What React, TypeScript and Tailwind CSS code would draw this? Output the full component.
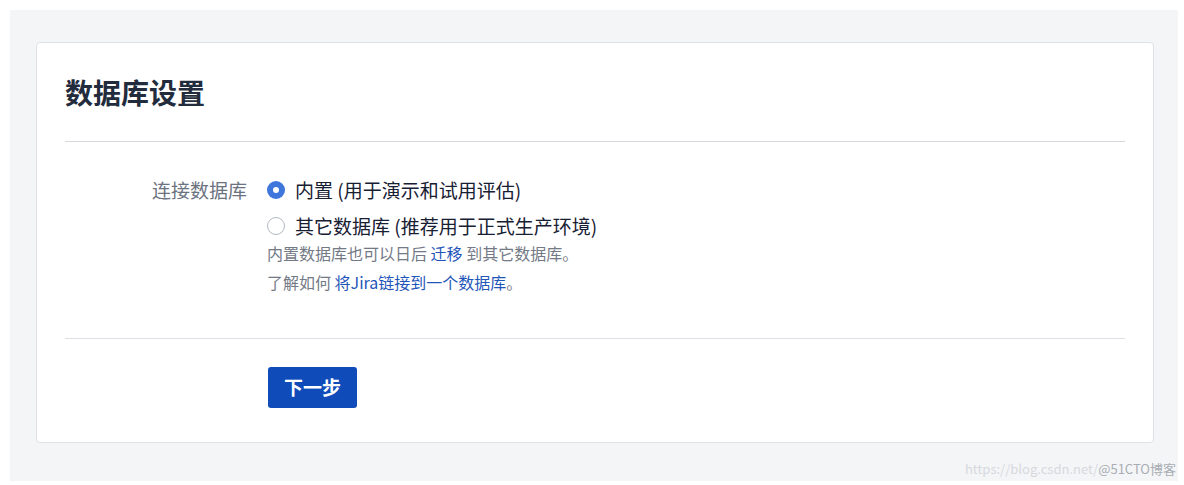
const font = { fontFamily: '"Noto Sans CJK SC", "Noto Sans", sans-serif' };

function Radio({ checked }: { checked?: boolean }) {
  if (checked) {
    return (
      <span className="flex h-[18px] w-[18px] shrink-0 items-center justify-center rounded-full bg-[#3f76dc]">
        <span className="h-[6px] w-[6px] rounded-full bg-white" />
      </span>
    );
  }
  return <span className="h-[18px] w-[18px] shrink-0 rounded-full border-[1.5px] border-[#b3b8c0] bg-white" />;
}

export default function App() {
  return (
    <div className="relative h-[485px] w-[1184px] bg-white pl-[10px] pt-[10px]" style={font}>
      <div className="h-[471px] w-[1168px] bg-[#f4f5f7] pl-[26px] pt-[32px]">
        <div className="h-[401px] w-[1118px] rounded-[4px] border border-[#dfe1e6] bg-white px-[28px] pt-[31px]">
          {/* Header */}
          <h1 className="text-[28px] font-bold leading-[36px] text-[#232c3d]">数据库设置</h1>
          <div className="mt-[31px] h-px bg-[#d6d9de]" />

          {/* Database choice */}
          <div className="mt-[32px] flex">
            <div className="w-[183px] pr-[1px] text-right text-[19px] leading-[32px] text-[#6b7280]">连接数据库</div>
            <div className="ml-[19px] flex flex-col">
              <div className="flex flex-col gap-[4px]">
                <label className="flex h-[32px] items-center gap-[10px] text-[19px] text-[#172033]">
                  <Radio checked />
                  内置 (用于演示和试用评估)
                </label>
                <label className="flex h-[32px] items-center gap-[10px] text-[19px] text-[#172033]">
                  <Radio />
                  其它数据库 (推荐用于正式生产环境)
                </label>
              </div>
              <div className="mt-[-3px] text-[16px] leading-[29px] text-[#737a86]">
                <p>
                  内置数据库也可以日后 <span className="text-[#1f56b8]">迁移</span> 到其它数据库。
                </p>
                <p>
                  了解如何 <span className="text-[#1f56b8]">将Jira链接到一个数据库</span>。
                </p>
              </div>
            </div>
          </div>

          <div className="mt-[41px] h-px bg-[#dcdfe3]" />

          <div className="mt-[28px] pl-[203px]">
            <button className="flex h-[41px] w-[89px] items-center justify-center rounded-[3px] bg-[#0f4cba] text-[19px] font-bold text-white">
              下一步
            </button>
          </div>
        </div>
      </div>

      {/* watermark */}
      <div className="absolute bottom-[7px] right-[8px] text-[13px] leading-[18px]">
        <span className="text-[#d6d9de]">https://blog.csdn.net/</span>
        <span className="text-[#a9adb3]">@51CTO博客</span>
      </div>
    </div>
  );
}
